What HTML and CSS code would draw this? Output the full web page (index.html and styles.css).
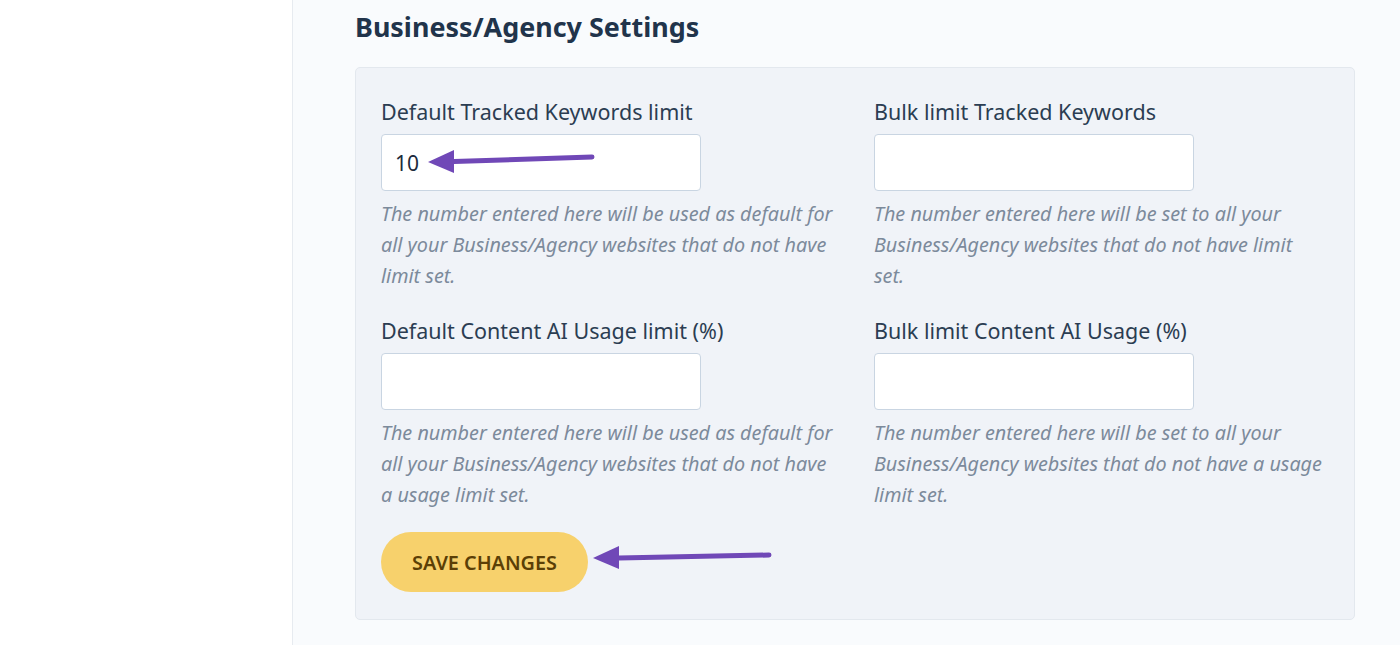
FILE: index.html
```html
<!DOCTYPE html>
<html lang="en">
<head>
    <meta charset="UTF-8">
    <meta name="viewport" content="width=device-width, initial-scale=1.0">
    <title>Business/Agency Settings</title>
    <link rel="stylesheet" href="styles.css">
</head>
<body>
    <div class="sidebar"></div>
    <div class="main">
        <h2 class="title">Business/Agency Settings</h2>
        <form class="panel">
            <div class="fields">
                <div class="field">
                    <label class="label">Default Tracked Keywords limit</label>
                    <div class="input-wrap">
                        <input type="text" class="input" value="10">
                        <svg class="arrow arrow-input" width="180" height="30" viewBox="0 0 180 30">
                            <path d="M28 13.5 L166 9" stroke="#7048b7" stroke-width="5" stroke-linecap="round" fill="none"/>
                            <path d="M2 14 L28 2 L28 25 Z" fill="#7048b7"/>
                        </svg>
                    </div>
                    <p class="help">The number entered here will be used as default for all your Business/Agency websites that do not have limit set.</p>
                </div>
                <div class="field">
                    <label class="label">Bulk limit Tracked Keywords</label>
                    <div class="input-wrap">
                        <input type="text" class="input">
                    </div>
                    <p class="help">The number entered here will be set to all your Business/Agency websites that do not have limit set.</p>
                </div>
                <div class="field">
                    <label class="label">Default Content AI Usage limit (%)</label>
                    <div class="input-wrap">
                        <input type="text" class="input">
                    </div>
                    <p class="help">The number entered here will be used as default for all your Business/Agency websites that do not have a usage limit set.</p>
                </div>
                <div class="field">
                    <label class="label">Bulk limit Content AI Usage (%)</label>
                    <div class="input-wrap">
                        <input type="text" class="input">
                    </div>
                    <p class="help">The number entered here will be set to all your Business/Agency websites that do not have a usage limit set.</p>
                </div>
            </div>
            <div class="actions">
                <button type="button" class="save-btn">SAVE CHANGES</button>
                <svg class="arrow arrow-btn" width="182" height="30" viewBox="0 0 182 30">
                    <path d="M28 13 L178 10" stroke="#7048b7" stroke-width="5" stroke-linecap="round" fill="none"/>
                    <path d="M2 13 L28 1 L28 24 Z" fill="#7048b7"/>
                </svg>
            </div>
        </form>
    </div>
</body>
</html>
```

FILE: styles.css
```css
body {
    margin: 0;
    display: flex;
    min-height: 100vh;
    font-family: "Noto Sans", "Open Sans", sans-serif;
    background-color: #f9fbfd;
    overflow: hidden;
}
.sidebar {
    width: 292px;
    flex-shrink: 0;
    background-color: #ffffff;
    border-right: 1px solid #e7ebf0;
}
.main {
    flex: 1;
    padding-left: 62px;
}
.title {
    margin: 9px 0 22px;
    font-size: 26.9px;
    line-height: 36px;
    font-weight: 700;
    color: #21344b;
}
.panel {
    width: 947px;
    padding: 28px 26px 27px 25px;
    background-color: #f0f3f8;
    border: 1px solid #e3e8ee;
    border-radius: 5px;
}
.fields {
    display: grid;
    grid-template-columns: 457px 449px;
    column-gap: 36px;
    row-gap: 24px;
}
.label {
    display: block;
    font-size: 21.5px;
    line-height: 31px;
    color: #2b3d52;
    margin-bottom: 7px;
}
.input-wrap {
    position: relative;
}
.input {
    box-sizing: border-box;
    width: 320px;
    height: 57px;
    padding: 0 13px;
    font-family: inherit;
    font-size: 21px;
    color: #1c2b3c;
    background-color: #ffffff;
    border: 1px solid #c9d5e2;
    border-radius: 4px;
}
.help {
    margin: 7px 0 0;
    font-size: 19.8px;
    line-height: 31px;
    font-style: italic;
    color: #7c8a9b;
}
.actions {
    position: relative;
    margin-top: 22px;
}
.save-btn {
    height: 60px;
    padding: 0 31px;
    font-family: inherit;
    font-size: 19.8px;
    font-weight: 600;
    color: #5b3f06;
    background-color: #f7d16c;
    border: none;
    border-radius: 30px;
    cursor: pointer;
}
.arrow {
    position: absolute;
}
.arrow-input {
    left: 45px;
    top: 14px;
}
.arrow-btn {
    left: 210px;
    top: 13px;
}
```
